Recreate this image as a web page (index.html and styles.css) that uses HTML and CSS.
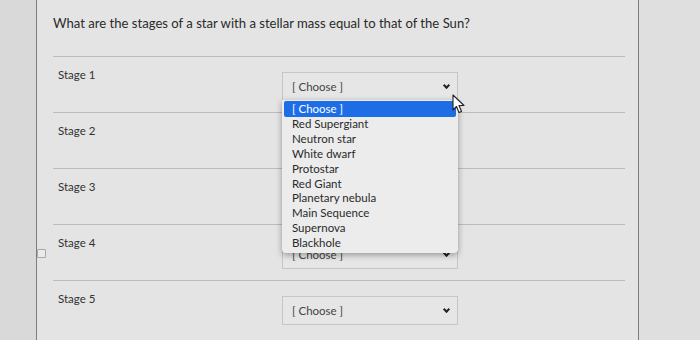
FILE: index.html
```html
<!DOCTYPE html>
<html>
<head>
<meta charset="utf-8">
<link rel="stylesheet" href="styles.css">
</head>
<body>
<div class="page">
  <div class="gutter"></div>
  <div class="card">
    <p class="question">What are the stages of a star with a stellar mass equal to that of the Sun?</p>
    <div class="rows">
      <div class="row">
        <span class="label">Stage 1</span>
        <div class="select-wrap">
          <div class="select"><span>[ Choose ]</span><span class="chev"></span></div>
          <ul class="menu">
            <li class="active">[ Choose ]</li>
            <li>Red Supergiant</li>
            <li>Neutron star</li>
            <li>White dwarf</li>
            <li>Protostar</li>
            <li>Red Giant</li>
            <li>Planetary nebula</li>
            <li>Main Sequence</li>
            <li>Supernova</li>
            <li>Blackhole</li>
          </ul>
          <svg class="cursor" width="14" height="20" viewBox="0 0 14 20"><path d="M1 1 L1 16 L4.5 12.5 L7 18.5 L9.5 17.5 L7 11.5 L12 11.5 Z" fill="#fff" stroke="#222" stroke-width="1.1" stroke-linejoin="round"/></svg>
        </div>
      </div>
      <div class="row">
        <span class="label">Stage 2</span>
        <div class="select-wrap"><div class="select"><span>[ Choose ]</span><span class="chev"></span></div></div>
      </div>
      <div class="row">
        <span class="label">Stage 3</span>
        <div class="select-wrap"><div class="select"><span>[ Choose ]</span><span class="chev"></span></div></div>
      </div>
      <div class="row">
        <span class="label">Stage 4</span>
        <div class="select-wrap"><div class="select"><span>[ Choose ]</span><span class="chev"></span></div></div>
        <span class="mark"></span>
      </div>
      <div class="row">
        <span class="label">Stage 5</span>
        <div class="select-wrap"><div class="select"><span>[ Choose ]</span><span class="chev"></span></div></div>
      </div>
    </div>
  </div>
  <div class="side"></div>
</div>
</body>
</html>
```

FILE: styles.css
```css
* { box-sizing: border-box; }
html, body { margin: 0; padding: 0; }
body {
  width: 700px;
  height: 340px;
  overflow: hidden;
  background: #dedede;
  font-family: Lato, "Open Sans", sans-serif;
  color: #333;
}
.page {
  display: flex;
  height: 340px;
}
.gutter {
  width: 37px;
  background: #d9d9d9;
  border-right: 1px solid #7d7d7d;
}
.card {
  width: 602px;
  background: #e4e4e4;
  border-right: 1px solid #7d7d7d;
  padding: 15px 0 0 16px;
}
.side {
  flex: 1;
  background: #dfdfdf;
}
.question {
  margin: 0;
  font-size: 13.1px;
  line-height: 16px;
  color: #2a2a2a;
}
.rows {
  margin-top: 25px;
  width: 572px;
}
.row {
  position: relative;
  display: flex;
  height: 56px;
  border-top: 1px solid #bcbcbc;
}
.label {
  width: 229px;
  padding: 11px 0 0 5px;
  font-size: 11.5px;
  line-height: 14px;
  color: #333;
}
.select-wrap {
  position: relative;
  margin-top: 15px;
  width: 176px;
  height: 29px;
}
.select {
  display: flex;
  align-items: center;
  justify-content: space-between;
  height: 100%;
  padding: 0 8px 0 9px;
  border: 1px solid #c6c6c6;
  background: #e6e6e6;
  font-size: 11.5px;
  color: #444;
}
.chev {
  width: 5px;
  height: 5px;
  border-right: 2px solid #222;
  border-bottom: 2px solid #222;
  transform: rotate(45deg);
  margin-top: -2px;
}
.menu {
  position: absolute;
  z-index: 2;
  left: 0;
  top: 28px;
  width: 176px;
  margin: 0;
  padding: 1px 2px 2px;
  list-style: none;
  background: #ececec;
  border-radius: 0 0 4px 4px;
  box-shadow: 0 2px 6px rgba(0, 0, 0, 0.35);
  font-size: 11.5px;
  color: #2a2a2a;
}
.menu li {
  height: 14.9px;
  line-height: 14.9px;
  padding-left: 8px;
}
.menu li.active {
  height: 16px;
  line-height: 16px;
  background: #1d6ee6;
  color: #fff;
  border-radius: 2px;
}
.cursor {
  position: absolute;
  z-index: 3;
  left: 170px;
  top: 22px;
}
.mark {
  position: absolute;
  left: -16px;
  top: 24px;
  width: 9px;
  height: 9px;
  border: 1px solid #a8a8a8;
  background: #eaeaea;
  border-radius: 1px;
}
```
